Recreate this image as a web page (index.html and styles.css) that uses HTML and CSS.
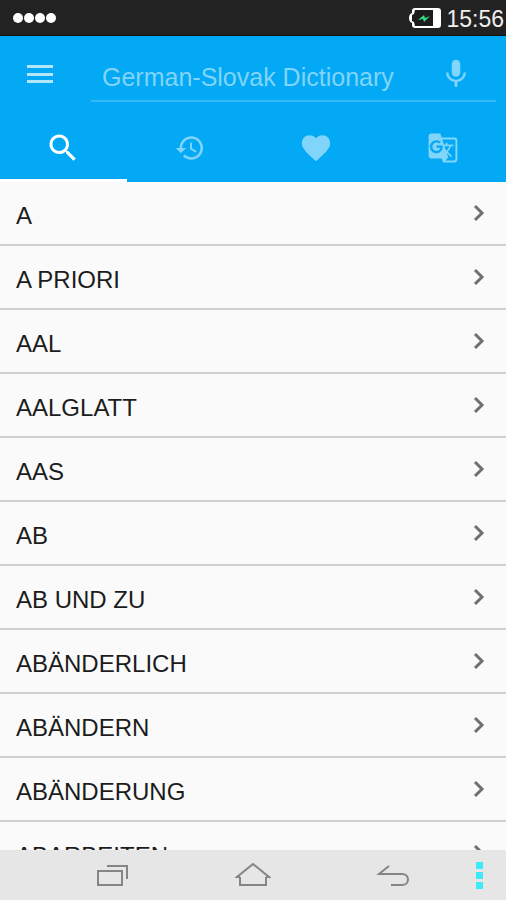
FILE: index.html
```html
<!DOCTYPE html>
<html lang="en">
<head>
    <meta charset="UTF-8">
    <meta name="viewport" content="width=device-width, initial-scale=1.0">
    <title>German-Slovak Dictionary</title>
    <link rel="stylesheet" href="styles.css">
</head>
<body>
    <div class="status-bar">
        <div class="signal"><span></span><span></span><span></span><span></span></div>
        <div class="status-right">
            <svg class="battery" viewBox="0 0 34 22" aria-hidden="true">
                <path d="M7 1h23q3 0 3 3v14q0 3-3 3H7q-3 0-3-3v-2q-3-1-3-5t3-5V4q0-3 3-3z" fill="#fff"/>
                <path d="M7 3h18v16H7l-1-4-2-1V8l2-1z" fill="#1c1c1c"/>
                <path d="M10 13l6-5 1 3 5-2-6 6-1-3z" fill="#2fdc80"/>
            </svg>
            <time>15:56</time>
        </div>
    </div>

    <header>
        <div class="search-row">
            <button type="button" class="menu-button" aria-label="Menu">
                <svg viewBox="0 0 36 36"><path d="M5 8h26v3H5zm0 8h26v3H5zm0 7h26v3H5z"/></svg>
            </button>
            <div class="search-field">
                <input type="text" id="search" aria-label="Search" placeholder="German-Slovak Dictionary">
                <button type="button" class="mic-button" aria-label="Voice search">
                    <svg viewBox="0 0 24 24"><path d="M12 14c1.66 0 2.99-1.34 2.99-3L15 5c0-1.66-1.34-3-3-3S9 3.34 9 5v6c0 1.66 1.34 3 3 3zm5.300-3c0 3-2.540 5.100-5.300 5.100S6.700 14 6.700 11H5c0 3.410 2.720 6.230 6 6.720V21h2v-3.280c3.280-.48 6-3.300 6-6.720h-1.700z"/></svg>
                </button>
            </div>
        </div>
        <nav class="tabs">
            <button type="button" class="tab active" aria-label="Search">
                <svg viewBox="0 0 24 24"><path d="M15.500 14h-.79l-.28-.27C15.410 12.590 16 11.110 16 9.500 16 5.910 13.090 3 9.500 3S3 5.910 3 9.500 5.910 16 9.500 16c1.610 0 3.090-.59 4.230-1.570l.27.28v.79l5 4.990L20.490 19l-4.990-5zm-6 0C7.010 14 5 11.990 5 9.500S7.010 5 9.500 5 14 7.010 14 9.500 11.990 14 9.500 14z"/></svg>
            </button>
            <button type="button" class="tab" aria-label="History">
                <svg viewBox="-1 -1 26 26"><path d="M13 3c-4.970 0-9 4.030-9 9H1l3.890 3.890.07.14L9 12H6c0-3.870 3.130-7 7-7s7 3.130 7 7-3.130 7-7 7c-1.930 0-3.680-.79-4.940-2.060l-1.420 1.420C8.270 19.990 10.510 21 13 21c4.970 0 9-4.030 9-9s-4.030-9-9-9zm-1 5v5l4.280 2.540.72-1.210-3.500-2.080V8H12z"/></svg>
            </button>
            <button type="button" class="tab" aria-label="Favorites">
                <svg viewBox="0 0 24 24"><path d="M12 21.350l-1.450-1.320C5.400 15.360 2 12.280 2 8.500 2 5.420 4.420 3 7.500 3c1.740 0 3.410.81 4.500 2.090C13.090 3.810 14.760 3 16.500 3 19.580 3 22 5.420 22 8.500c0 3.780-3.400 6.860-8.550 11.540L12 21.350z"/></svg>
            </button>
            <button type="button" class="tab" aria-label="Translate">
                <svg viewBox="-1 -1 26 26"><path d="M21 4H11l-1-3H3c-1.100 0-2 .9-2 2v15c0 1.100.9 2 2 2h8l1 3h9c1.100 0 2-.9 2-2V6c0-1.100-.9-2-2-2zM7 16c-2.760 0-5-2.240-5-5s2.240-5 5-5c1.350 0 2.480.5 3.350 1.300L9.030 8.570c-.38-.36-1.040-.78-2.030-.78-1.740 0-3.150 1.440-3.150 3.210S5.260 14.210 7 14.210c2.010 0 2.840-1.440 2.920-2.410H7v-1.710h4.680c.07.31.12.61.12 1.020C11.800 13.970 9.890 16 7 16zm6.170-5.420h3.700c-.43 1.250-1.110 2.430-2.050 3.470-.31-.35-.6-.72-.86-1.100l-.79-2.370zm8.330 9.920c0 .55-.45 1-1 1H14l2-2.500-1.040-3.100 3.100 3.100.92-.92-3.300-3.250.02-.02c1.130-1.250 1.930-2.690 2.400-4.220H20v-1.300h-4.530V8h-1.290v1.290h-1.440L11.460 5.500h9.040c.55 0 1 .45 1 1v14z"/></svg>
            </button>
        </nav>
    </header>

    <main>
        <ul class="word-list" id="wordList"></ul>
    </main>

    <footer>
        <button type="button" aria-label="Recent apps">
            <svg viewBox="0 0 36 28"><path d="M3 10h24v14H3zM12 5h20v13"/></svg>
        </button>
        <button type="button" aria-label="Home">
            <svg viewBox="0 0 36 28"><path d="M5 16v8h26v-8M5 16H2L18 3l16 13h-3"/></svg>
        </button>
        <button type="button" aria-label="Back">
            <svg viewBox="0 0 36 28"><path d="M14 5L4 13h23c8 0 8 11 0 11H16"/></svg>
        </button>
        <button type="button" class="more" aria-label="More options">
            <span></span><span></span><span></span>
        </button>
    </footer>

    <script>
        var words = ['A', 'A PRIORI', 'AAL', 'AALGLATT', 'AAS', 'AB', 'AB UND ZU',
            'ABÄNDERLICH', 'ABÄNDERN', 'ABÄNDERUNG', 'ABARBEITEN'];
        var wordList = document.getElementById('wordList');

        for (var i = 0; i < words.length; i++) {
            var item = document.createElement('li');
            item.innerHTML = '<a href="#"><span>' + words[i] + '</span>' +
                '<svg viewBox="0 0 12 18"><path d="M2 2l7 7-7 7"/></svg></a>';
            wordList.appendChild(item);
        }
    </script>
</body>
</html>
```
FILE: styles.css
```css
* {
    box-sizing: border-box;
}

body {
    display: flex;
    flex-direction: column;
    height: 100vh;
    margin: 0;
    font-family: "Liberation Sans", Arial, sans-serif;
    background-color: #fafafa;
}

button {
    display: flex;
    align-items: center;
    justify-content: center;
    padding: 0;
    border: none;
    background: none;
    cursor: pointer;
}

svg {
    display: block;
}

.status-bar {
    display: flex;
    flex-shrink: 0;
    align-items: center;
    justify-content: space-between;
    height: 36px;
    padding: 0 2px 0 13px;
    background-color: #222;
    border-bottom: 1px solid #111;
    color: #eee;
}

.signal {
    display: flex;
    gap: 1px;
}

.signal span {
    width: 10px;
    height: 10px;
    border-radius: 50%;
    background-color: #fff;
}

.status-right {
    display: flex;
    align-items: center;
    gap: 4px;
    font-size: 23px;
}

.status-right time {
    padding-top: 4px;
}

.battery {
    width: 34px;
    height: 22px;
}

header {
    flex-shrink: 0;
    background-color: #03a9f4;
}

header svg {
    width: 34px;
    height: 34px;
    fill: #81d4fa;
}

.search-row {
    display: flex;
    align-items: center;
    gap: 33px;
    height: 78px;
    padding: 0 10px 0 22px;
}

.menu-button svg {
    width: 36px;
    height: 36px;
    fill: #b3e5fc;
}

.search-field {
    display: flex;
    flex: 1;
    align-items: center;
    height: 54px;
    padding: 0 23px 0 11px;
    border-bottom: 2px solid #35baf6;
}

.search-field input {
    flex: 1;
    min-width: 0;
    padding: 6px 0 0;
    border: none;
    outline: none;
    background: none;
    font-family: inherit;
    font-size: 25px;
    color: #fff;
}

.search-field input::placeholder {
    color: #81d4fa;
}

.tabs {
    display: flex;
    height: 68px;
}

.tab {
    flex: 1;
    padding-top: 3px;
    border-bottom: 3px solid transparent;
}

.tab.active {
    border-bottom-color: #fff;
}

.tab.active svg {
    width: 36px;
    height: 36px;
    fill: #fff;
}

main {
    flex: 1;
    min-height: 0;
    overflow-y: auto;
    scrollbar-width: none;
}

.word-list {
    margin: 0;
    padding: 0;
    list-style: none;
}

.word-list a {
    display: flex;
    align-items: center;
    justify-content: space-between;
    height: 64px;
    padding: 0 21px 0 16px;
    border-bottom: 2px solid #d0d0d0;
    font-size: 24px;
    color: #1c1c1c;
    text-decoration: none;
}

.word-list span {
    padding-top: 6px;
}

.word-list svg {
    width: 12px;
    height: 18px;
    fill: none;
    stroke: #707070;
    stroke-width: 3;
}

footer {
    display: grid;
    grid-template-columns: 1fr 1fr 1fr;
    flex-shrink: 0;
    position: relative;
    height: 50px;
    padding: 0 43px;
    background-color: #e6e6e6;
}

footer svg {
    width: 36px;
    height: 28px;
    fill: none;
    stroke: #858585;
    stroke-width: 2;
}

/* overflow dots sit over the right edge of the bar */
.more {
    position: absolute;
    top: 0;
    right: 17px;
    flex-direction: column;
    gap: 3px;
    width: 20px;
    height: 50px;
}

.more span {
    width: 7px;
    height: 7px;
    background-color: #3deaf5;
}
```
